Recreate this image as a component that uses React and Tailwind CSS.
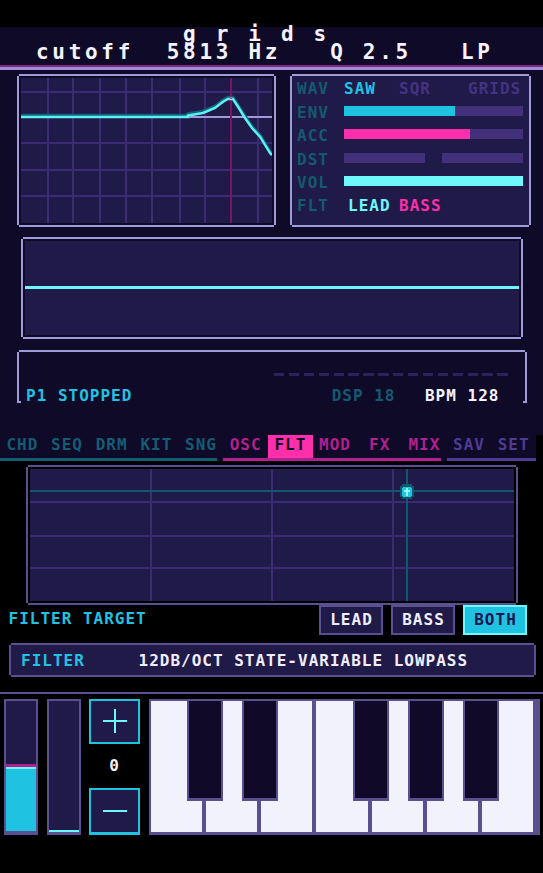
// Groovebox filter page: scope, voice params, tabs, XY pad and keys

function Notches({ fill }) {
  // knock the 2px corners off a frame so it reads as pixel art
  return (
    <>
      <span className={`absolute -left-[2px] -top-[2px] size-[2px] ${fill}`} />
      <span className={`absolute -right-[2px] -top-[2px] size-[2px] ${fill}`} />
      <span className={`absolute -left-[2px] -bottom-[2px] size-[2px] ${fill}`} />
      <span className={`absolute -right-[2px] -bottom-[2px] size-[2px] ${fill}`} />
    </>
  )
}

const curve =
  '0,39 167,39 167,37.5 182,35 194,30 202,23.7 207,21 212,21 217,28.7 224,40 231,50 239,58.7 249,75 251,77'

function ResponseGraph() {
  const vx = [26.7, 51.7, 79, 105.3, 131, 159, 183.7, 236.7]
  const hy = [13.7, 64.7, 92, 117.7]
  return (
    <svg width="251" height="145" viewBox="0 0 251 145" className="block" shapeRendering="crispEdges">
      {vx.map(x => <rect key={x} x={x - 1} y="0" width="2" height="145" fill="#3d2a75" />)}
      {hy.map(y => <rect key={y} x="0" y={y - 1} width="251" height="2" fill="#3d2a75" />)}
      <rect x="0" y="37.7" width="251" height="2" fill="#9f9ad8" />
      <rect x="208.7" y="0" width="2" height="145" fill="#7a1466" />
      <polyline points={curve} transform="translate(0,-1.8)" fill="none" stroke="#0f6577" strokeWidth="3" shapeRendering="auto" />
      <polyline points={curve} fill="none" stroke="#5ef1f4" strokeWidth="2.5" shapeRendering="auto" />
      <rect x="208.7" y="19" width="2" height="2" fill="#ff2eaa" />
    </svg>
  )
}

function FilterPad() {
  return (
    <svg width="484" height="132" viewBox="0 0 484 132" className="block" shapeRendering="crispEdges">
      {[121, 242, 363].map(x => <rect key={x} x={x - 1} y="0" width="2" height="132" fill="#3d2a75" />)}
      {[33, 67, 99].map(y => <rect key={y} x="0" y={y - 1} width="484" height="2" fill="#3d2a75" />)}
      <rect x="0" y="21" width="484" height="2" fill="#0e5870" />
      <rect x="375.5" y="0" width="2" height="132" fill="#0e5870" />
      <g transform="translate(376.5,22.5)">
        <rect x="-5" y="-7.5" width="10" height="15" fill="#0e5870" />
        <rect x="-7" y="-5.5" width="14" height="11" fill="#0e5870" />
        <rect x="-4" y="-5" width="8" height="10" fill="#22c4e2" />
        <rect x="-5" y="-4" width="10" height="8" fill="#22c4e2" />
        <rect x="-1" y="-4" width="2" height="8" fill="#8ff8ff" />
        <rect x="-3" y="-1.5" width="6" height="2" fill="#8ff8ff" />
      </g>
    </svg>
  )
}

const tabGroups = [
  { tabs: ['CHD', 'SEQ', 'DRM', 'KIT', 'SNG'], width: 'w-[223.33px]', text: 'text-[#135d73]', line: 'mr-[6px] bg-[#135d73]' },
  { tabs: ['OSC', 'FLT', 'MOD', 'FX', 'MIX'], width: 'w-[223.33px]', text: 'text-[#b21f8f]', line: 'mr-[6px] bg-[#b21f8f]' },
  { tabs: ['SAV', 'SET'], width: 'w-[89.34px]', text: 'text-[#4d3b95]', line: 'bg-[#4d3b95]' },
]

const blackKeys = ['left-[36.3px]', 'left-[91.3px]', 'left-[202.3px]', 'left-[257.3px]', 'left-[312.3px]']

export default function App() {
  return (
    <div className="w-[543px] h-[873px] overflow-hidden bg-black font-['DejaVu_Sans_Mono',monospace] font-bold text-[16px] leading-4 tracking-[1px]">
      <div className="h-[27px]" />

      <div className="h-[408px] bg-[#0f0a28]">
        <header className="flex flex-col h-[38px] text-[#f5f3ff] text-[21px] leading-[18px] whitespace-pre">
          <div className="-mt-[1.6px] h-[18px] pl-[183px] tracking-[20px]">grids</div>
          <div className="h-[18px] pl-[36px] tracking-[3.7px]">{'cutoff  5813 Hz   Q 2.5   LP'}</div>
        </header>
        <div className="h-[2px] bg-[#82287f]" />
        <div className="h-[3px] bg-[#9e8ad6]" />

        <div className="mt-[4px] flex gap-[14px] pl-[17px]">
          <div className="relative w-[259px] h-[153px] border-2 border-[#9f9ad8] p-[2px]">
            <div className="h-full bg-[#201a48]">
              <ResponseGraph />
            </div>
            <Notches fill="bg-[#0f0a28]" />
          </div>

          <div className="relative w-[241px] h-[153px] border-2 border-[#9f9ad8] bg-[#201a48] pl-[5px] pr-[6px] pt-[5.4px]">
            <div className="flex h-[23.4px]">
              <span className="w-[47px] text-[#145a6e]">WAV</span>
              <span className="w-[55px] text-[#20c2e2]">SAW</span>
              <span className="w-[69px] text-[#443383]">SQR</span>
              <span className="text-[#443383]">GRIDS</span>
            </div>
            <div className="flex h-[23.4px]">
              <span className="w-[47px] text-[#145a6e]">ENV</span>
              <div className="mt-[1px] h-[10px] w-[179px] bg-[#42307a]">
                <div className="h-full w-[62%] bg-[#20c2e2]" />
              </div>
            </div>
            <div className="flex h-[23.4px]">
              <span className="w-[47px] text-[#145a6e]">ACC</span>
              <div className="mt-[1px] h-[10px] w-[179px] bg-[#42307a]">
                <div className="h-full w-[70.4%] bg-[#ff2eaa]" />
              </div>
            </div>
            <div className="flex h-[23.4px]">
              <span className="w-[47px] text-[#145a6e]">DST</span>
              <div className="mt-[1px] h-[10px] w-[179px] flex justify-between">
                <div className="h-full w-[81px] bg-[#42307a]" />
                <div className="h-full w-[81px] bg-[#42307a]" />
              </div>
            </div>
            <div className="flex h-[23.4px]">
              <span className="w-[47px] text-[#145a6e]">VOL</span>
              <div className="mt-[1px] h-[10px] w-[179px] bg-[#6ef8fb]" />
            </div>
            <div className="flex h-[23.4px]">
              <span className="w-[51px] text-[#145a6e]">FLT</span>
              <span className="w-[51px] text-[#6ef8fb]">LEAD</span>
              <span className="text-[#ff2eaa]">BASS</span>
            </div>
            <Notches fill="bg-[#0f0a28]" />
          </div>
        </div>

        <div className="relative mt-[10px] ml-[21px] w-[502px] h-[102px] border-2 border-[#9f9ad8] p-[2px]">
          <div className="h-full bg-[#201a48] pt-[45px]">
            <div className="h-[3px] bg-[#6ef8fb]" />
          </div>
          <Notches fill="bg-[#0f0a28]" />
        </div>

        <div className="relative mt-[11px] ml-[17px] w-[510px] h-[53px] border-x-2 border-t-2 border-[#9f9ad8]">
          <span className="absolute -left-[2px] -top-[2px] size-[2px] bg-[#0f0a28]" />
          <span className="absolute -right-[2px] -top-[2px] size-[2px] bg-[#0f0a28]" />
          <span className="absolute left-0 bottom-0 size-[2px] bg-[#9f9ad8]" />
          <span className="absolute right-0 bottom-0 size-[2px] bg-[#9f9ad8]" />
          <div className="ml-[255px] mt-[21px] flex gap-[4.6px]">
            {Array.from({ length: 16 }, (_, i) => (
              <div key={i} className="w-[10.3px] h-[3px] bg-[#2a2160]" />
            ))}
          </div>
          <div className="mt-[12px] flex pl-[7px]">
            <span className="w-[305.7px] text-[#20c2e2]">P1 STOPPED</span>
            <span className="w-[93.3px] text-[#125a70]">DSP 18</span>
            <span className="text-[#f4f2ff]">BPM 128</span>
          </div>
        </div>
      </div>

      <nav className="flex w-[536px] h-[26px] bg-[#0f0a28]">
        {tabGroups.map(g => (
          <div key={g.tabs[0]} className={`flex flex-col ${g.width}`}>
            <div className="flex h-[23px]">
              {g.tabs.map(t =>
                t === 'FLT' ? (
                  <div key={t} className="flex-1 pt-[1.5px] text-center bg-[#ff2eaa] text-[#120a22]">{t}</div>
                ) : (
                  <div key={t} className={`flex-1 pt-[1.5px] text-center ${g.text}`}>{t}</div>
                )
              )}
            </div>
            <div className={`h-[3px] ${g.line}`} />
          </div>
        ))}
      </nav>

      <div className="relative mt-[4px] ml-[26px] w-[492px] h-[140px] border-2 border-[#5a4f8f] p-[2px]">
        <div className="h-full bg-[#201a48]">
          <FilterPad />
        </div>
        <Notches fill="bg-black" />
      </div>

      <div className="flex h-[30px]">
        <span className="w-[319px] pl-[8.5px] pt-[6.4px] text-[#20c2e2]">FILTER TARGET</span>
        <div className="flex gap-[8px]">
          <button className="w-[64px] h-[30px] border-2 border-[#5a4f8f] bg-[#201a48] text-[#f0eeff] pl-[1px]">LEAD</button>
          <button className="w-[64px] h-[30px] border-2 border-[#5a4f8f] bg-[#201a48] text-[#f0eeff] pl-[1px]">BASS</button>
          <button className="w-[64px] h-[30px] border-2 border-[#6ef8fb] bg-[#20c2e2] text-[#1a1450] pl-[1px]">BOTH</button>
        </div>
      </div>

      <div className="relative mt-[8px] ml-[9px] w-[527px] h-[34px] border-2 border-[#5a4f8f] bg-[#201a48] pt-[8px] pl-[10px] flex">
        <span className="w-[117.5px] text-[#20c2e2]">FILTER</span>
        <span className="text-[#f0eeff]">12DB/OCT STATE-VARIABLE LOWPASS</span>
        <Notches fill="bg-black" />
      </div>

      <div className="mt-[15px] h-[2px] bg-[#5a4f8f]" />

      <div className="mt-[5px] flex pl-[4px]">
        <div className="w-[34px] h-[136px] border-2 border-b-4 border-[#5a4f8f] bg-[#201a48] flex flex-col justify-end">
          <div className="h-[3px] bg-[#b21f8f]" />
          <div className="h-[2px] bg-[#6ef8fb]" />
          <div className="h-[62px] bg-[#20c2e2]" />
        </div>

        <div className="ml-[9px] w-[34px] h-[136px] border-2 border-b-[3px] border-[#5a4f8f] bg-[#201a48] flex flex-col justify-end">
          <div className="h-[2px] bg-[#6ef8fb]" />
        </div>

        <div className="ml-[8px] w-[51px] flex flex-col">
          <button className="h-[45px] border-2 border-[#20c2e2] bg-[#201a48] flex items-center justify-center">
            <svg width="24" height="25" viewBox="0 0 24 25" shapeRendering="crispEdges">
              <rect x="11" y="0" width="2.3" height="24.3" fill="#6ef8fb" />
              <rect x="0" y="11" width="24" height="2.3" fill="#6ef8fb" />
            </svg>
          </button>
          <div className="h-[44px] flex items-center justify-center text-[#f4f2ff]">0</div>
          <button className="h-[47px] border-2 border-b-[3px] border-[#20c2e2] bg-[#201a48] flex items-center justify-center">
            <svg width="24" height="2" viewBox="0 0 24 2" shapeRendering="crispEdges">
              <rect x="0" y="0" width="24" height="2" fill="#6ef8fb" />
            </svg>
          </button>
        </div>

        <div className="relative ml-[9px] w-[391px] h-[136px] border-t-2 border-l-2 border-r-[7px] border-b-[3px] border-[#5a4f8f] bg-[#5a4f8f] flex gap-[4px]">
          {Array.from({ length: 7 }, (_, i) => (
            <div key={i} className="flex-1 bg-[#f2f2fc]" />
          ))}
          {blackKeys.map(pos => (
            <div
              key={pos}
              className={`absolute -top-[2px] ${pos} w-[35.4px] h-[102px] border-x-2 border-t-2 border-b-[3px] border-[#5a4f8f] bg-[#100a28]`}
            />
          ))}
        </div>
      </div>
    </div>
  )
}
